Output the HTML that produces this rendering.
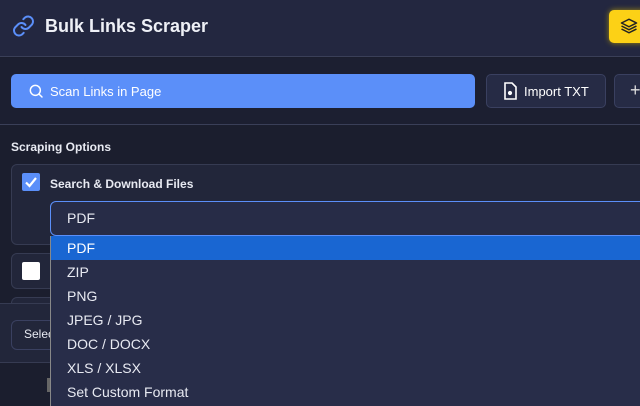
<!DOCTYPE html>
<html><head><style>
*{box-sizing:border-box;margin:0;padding:0}
body{width:640px;height:400px;overflow:hidden;background:#1b1e2e;font-family:"Liberation Sans",sans-serif;color:#e8eaf2;position:relative}
.abs{position:absolute}
</style></head><body>
<div class="abs" style="left:0;top:0;width:640px;height:57px;background:#232740;border-bottom:1px solid #3a3f58"></div>
<svg class="abs" style="left:11px;top:14px" width="25" height="24" viewBox="0 0 24 24" fill="none" stroke="#5b8ff9" stroke-width="2" stroke-linecap="round"><path d="M10 13a5 5 0 0 0 7.5.5l3-3a5 5 0 0 0-7-7l-1.7 1.7"/><path d="M14 11a5 5 0 0 0-7.5-.5l-3 3a5 5 0 0 0 7 7l1.7-1.7"/></svg>
<div class="abs" style="left:45px;top:16px;font-size:18px;font-weight:bold;color:#eef0f6">Bulk Links Scraper</div>
<div class="abs" style="left:609px;top:10px;width:45px;height:33px;background:#fcd116;border-radius:5px;box-shadow:0 0 6px #a08a10"></div>
<svg class="abs" style="left:620px;top:17px" width="18" height="18" viewBox="0 0 24 24" fill="none" stroke="#222" stroke-width="2" stroke-linejoin="round"><path d="M12 3 2 8l10 5 10-5z"/><path d="m2 12 10 5 10-5"/><path d="m2 16 10 5 10-5"/></svg>
<div class="abs" style="left:0;top:58px;width:640px;height:67px;background:#1c1f31;border-bottom:1px solid #3a3f58"></div>
<div class="abs" style="left:11px;top:74px;width:464px;height:34px;background:#5b8ff9;border-radius:5px"></div>
<svg class="abs" style="left:28px;top:83px" width="16" height="16" viewBox="0 0 24 24" fill="none" stroke="#fff" stroke-width="2.2" stroke-linecap="round"><circle cx="11" cy="11" r="7.5"/><path d="m17 17 4 4"/></svg>
<div class="abs" style="left:50px;top:84px;font-size:13px;color:#fff">Scan Links in Page</div>
<div class="abs" style="left:486px;top:74px;width:120px;height:34px;background:#262b45;border:1px solid #3a4060;border-radius:5px"></div>
<svg class="abs" style="left:503px;top:82px" width="14" height="18" viewBox="0 0 14 18" fill="none" stroke="#fff" stroke-width="1.6"><path d="M2 1h7l4 4v12H2z"/><circle cx="7" cy="11" r="1.3" fill="#fff"/></svg>
<div class="abs" style="left:524px;top:84px;font-size:13px;color:#fff">Import TXT</div>
<div class="abs" style="left:614px;top:74px;width:40px;height:34px;background:#262b45;border:1px solid #3a4060;border-radius:5px"></div>
<div class="abs" style="left:630px;top:80px;font-size:18px;color:#ddd">+</div>
<div class="abs" style="left:11px;top:140px;font-size:12px;font-weight:bold;color:#e8eaf2">Scraping Options</div>
<div class="abs" style="left:11px;top:164px;width:640px;height:81px;background:#22263a;border:1px solid #363b52;border-radius:6px"></div>
<div class="abs" style="left:22px;top:173px;width:18px;height:18px;background:#5b8ff9;border-radius:2px"></div>
<svg class="abs" style="left:24px;top:175px" width="14" height="14" viewBox="0 0 14 14" fill="none" stroke="#fff" stroke-width="2.2"><path d="M2 7.5 5.5 11 12 3"/></svg>
<div class="abs" style="left:50px;top:177px;font-size:12px;font-weight:bold;color:#e8eaf2">Search &amp; Download Files</div>
<div class="abs" style="left:50px;top:201px;width:600px;height:35px;background:#272c47;border:1px solid #5b8ff9;border-radius:6px"></div>
<div class="abs" style="left:67px;top:210px;font-size:14px;color:#e8eaf2">PDF</div>
<div class="abs" style="left:11px;top:253px;width:640px;height:36px;background:#22263a;border:1px solid #363b52;border-radius:6px"></div>
<div class="abs" style="left:22px;top:262px;width:18px;height:18px;background:#fff;border-radius:2px"></div>
<div class="abs" style="left:11px;top:297px;width:640px;height:20px;background:#22263a;border:1px solid #363b52;border-radius:6px"></div>
<div class="abs" style="left:0;top:303px;width:640px;height:60px;background:#22263a;border-top:1px solid #363b52;border-bottom:1px solid #363b52"></div>
<div class="abs" style="left:11px;top:320px;width:100px;height:30px;border:1px solid #3a4060;border-radius:6px"></div>
<div class="abs" style="left:24px;top:327px;font-size:12px;color:#e8eaf2">Select</div>
<div class="abs" style="left:47px;top:378px;width:5px;height:14px;background:#666"></div>
<div class="abs" style="left:50px;top:236px;width:600px;height:170px;background:#282d49;border-left:1px solid #888;font-size:14px;color:#e8eaf2">
<div style="height:24px;line-height:24px;padding-left:16px;background:#1966d2;color:#fff">PDF</div>
<div style="height:24px;line-height:24px;padding-left:16px">ZIP</div>
<div style="height:24px;line-height:24px;padding-left:16px">PNG</div>
<div style="height:24px;line-height:24px;padding-left:16px">JPEG / JPG</div>
<div style="height:24px;line-height:24px;padding-left:16px">DOC / DOCX</div>
<div style="height:24px;line-height:24px;padding-left:16px">XLS / XLSX</div>
<div style="height:24px;line-height:24px;padding-left:16px">Set Custom Format</div>
</div>
</body></html>
